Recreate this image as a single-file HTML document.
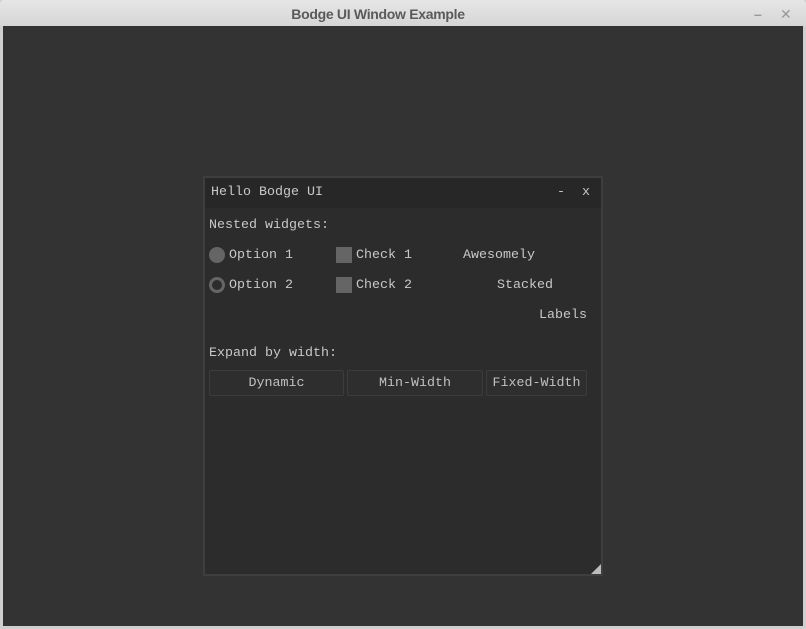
<!DOCTYPE html>
<html><head><style>
*{margin:0;padding:0;box-sizing:border-box}
body{width:806px;height:629px;background:#cfcfcf;position:relative;overflow:hidden;font-family:"Liberation Mono",monospace;font-size:13.33px;color:#c8c8c8}
.tb{position:absolute;left:0;top:0;width:806px;height:26px;background:linear-gradient(#e6e6e6,#d6d6d6);border-radius:4px 4px 0 0;font-family:"Liberation Sans",sans-serif;font-weight:bold;font-size:14px;color:#5a5a5a;line-height:29px;letter-spacing:-0.3px}
.tb .tt{position:absolute;left:291px;top:0;width:174px;text-align:center;white-space:nowrap}
.tb .m{position:absolute;left:754px;top:0;color:#999;font-weight:bold}
.tb .x{position:absolute;left:780px;top:0;color:#999;font-weight:normal}
.main{position:absolute;left:3px;top:26px;width:800px;height:600px;background:#333}
.win{position:absolute;left:203px;top:176px;width:400px;height:400px;background:#2c2c2c;border:2px solid #3e3e3e}
.hdr{position:absolute;left:0;top:0;width:396px;height:30px;background:#272727}
.t{position:absolute;white-space:pre;line-height:16px}
.rad{position:absolute;width:16px;height:16px;border-radius:50%}
.chk{position:absolute;width:16px;height:16px;background:#656565}
.btn{position:absolute;top:370px;height:26px;background:#2e2e2e;border:1px solid #3c3c3c;border-radius:2px;text-align:center;line-height:26px;color:#c0c0c0}
.grip{position:absolute;left:591px;top:564px;width:0;height:0;border-left:10px solid transparent;border-bottom:10px solid #bcbcbc}
</style></head><body>
<div class="tb"><span class="tt">Bodge UI Window Example</span><span class="m">–</span><span class="x">✕</span></div>
<div class="main"></div>
<div class="win"><div class="hdr"></div></div>
<div class="t" style="left:211px;top:185px">Hello Bodge UI</div>
<div class="t" style="left:557px;top:185px">-</div>
<div class="t" style="left:582px;top:185px">x</div>
<div class="t" style="left:209px;top:218px">Nested widgets:</div>
<div class="rad" style="left:209px;top:247px;background:#656565"></div>
<div class="t" style="left:229px;top:248px">Option 1</div>
<div class="rad" style="left:209px;top:277px;border:3px solid #656565"></div>
<div class="t" style="left:229px;top:278px">Option 2</div>
<div class="chk" style="left:336px;top:247px"></div>
<div class="t" style="left:356px;top:248px">Check 1</div>
<div class="chk" style="left:336px;top:277px"></div>
<div class="t" style="left:356px;top:278px">Check 2</div>
<div class="t" style="left:463px;top:248px">Awesomely</div>
<div class="t" style="left:497px;top:278px">Stacked</div>
<div class="t" style="left:539px;top:308px">Labels</div>
<div class="t" style="left:209px;top:346px">Expand by width:</div>
<div class="btn" style="left:209px;width:135px">Dynamic</div>
<div class="btn" style="left:347px;width:136px">Min-Width</div>
<div class="btn" style="left:486px;width:101px">Fixed-Width</div>
<div class="grip"></div>
</body></html>
